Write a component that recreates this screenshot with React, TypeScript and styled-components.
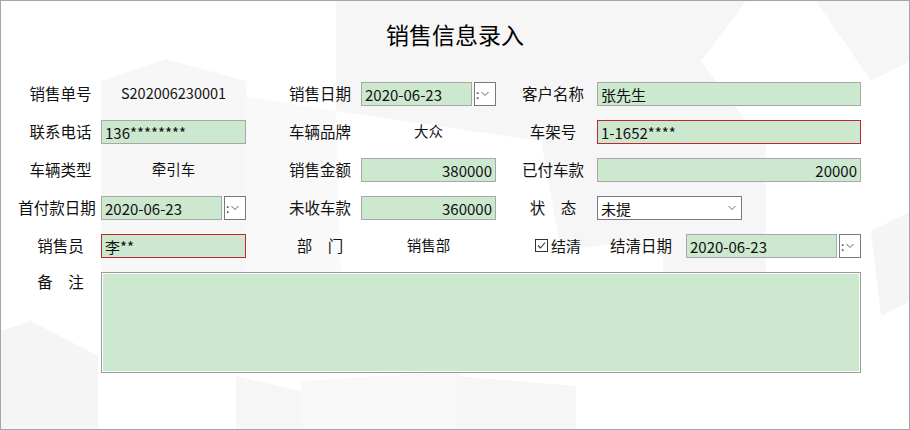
import React, { FC } from "react";
import styled, { createGlobalStyle } from "styled-components";

const GlobalStyle = createGlobalStyle`
  body {
    margin: 0;
    background: #fff;
    font-family: "Noto Sans CJK SC", "Noto Sans", sans-serif;
  }
`;

const GREEN = "#cce8cf";

const Backdrop: FC = () => (
  <BackSvg viewBox="0 0 910 430" width={910} height={430}>
    <polygon points="335,0 745,0 700,60 760,140 700,230 560,250 540,140 335,110" fill="#f6f6f6" />
    <polygon points="815,0 910,0 910,60 870,80" fill="#f6f6f6" />
    <polygon points="100,80 165,58 245,80 245,280 235,290 100,290" fill="#f7f7f7" />
    <polygon points="245,95 335,110 340,280 245,280" fill="#f9f9f9" />
    <polygon points="662,150 765,130 765,280 662,300" fill="#f6f6f6" />
    <polygon points="870,230 910,210 910,300 880,315" fill="#f5f5f5" />
    <polygon points="0,330 30,320 97,355 97,430 0,430" fill="#f5f5f5" />
    <polygon points="235,375 300,390 300,430 235,430" fill="#f6f6f6" />
    <polygon points="300,380 455,370 510,420 510,430 300,430" fill="#f8f8f8" />
    <polygon points="455,375 575,385 575,430 455,430" fill="#f6f6f6" />
  </BackSvg>
);

const Chevron: FC<{ color?: string }> = ({ color = "#606060" }) => (
  <svg width="8" height="6" viewBox="0 0 8 6">
    <path d="M0.5 1 L4 4.5 L7.5 1" fill="none" stroke={color} strokeWidth="1" />
  </svg>
);

const DateField: FC<{ value: string }> = ({ value }) => (
  <DateWrap>
    <Field>{value}</Field>
    <DropBtn>
      <Colon>:</Colon>
      <Chevron />
    </DropBtn>
  </DateWrap>
);

const App: FC = () => {
  return (
    <>
      <GlobalStyle />
      <Window>
        <Backdrop />
        <Content>
          <Title>销售信息录入</Title>
          <Form>
            <Label $pad={10}>销售单号</Label>
            <Value>S202006230001</Value>
            <Label $pad={33}>销售日期</Label>
            <DateField value="2020-06-23" />
            <Label $pad={13}>客户名称</Label>
            <Field>张先生</Field>

            <Label $pad={10}>联系电话</Label>
            <Field>136********</Field>
            <Label $pad={33}>车辆品牌</Label>
            <Value>大众</Value>
            <Label $pad={13}>车架号</Label>
            <Field $red>1-1652****</Field>

            <Label $pad={10}>车辆类型</Label>
            <Value>牵引车</Value>
            <Label $pad={33}>销售金额</Label>
            <Field $right>380000</Field>
            <Label $pad={13}>已付车款</Label>
            <Field $right>20000</Field>

            <Label $pad={3}>首付款日期</Label>
            <DateField value="2020-06-23" />
            <Label $pad={33}>未收车款</Label>
            <Field $right>360000</Field>
            <Label $pad={13}>状{"\u3000"}态</Label>
            <SelectCell>
              <Select>
                <span>未提</span>
                <Chevron color="#707070" />
              </Select>
            </SelectCell>

            <Label $pad={10}>销售员</Label>
            <Field $red>李**</Field>
            <Label $pad={33}>部{"\u3000"}门</Label>
            <Value>销售部</Value>
            <SettleRow>
              <Check>
                <CheckBox viewBox="0 0 13 13" width={13} height={13}>
                  <rect x="0.5" y="0.5" width="12" height="12" fill="#fff" stroke="#333" />
                  <path d="M3 6.5 L5.5 9 L10 3.5" fill="none" stroke="#333" strokeWidth="1.1" />
                </CheckBox>
                结清
              </Check>
              <SettleLabel>结清日期</SettleLabel>
              <SettleDate>
                <DateField value="2020-06-23" />
              </SettleDate>
            </SettleRow>

            <Label $pad={10} $top>
              备{"\u3000"}注
            </Label>
            <Notes />
          </Form>
        </Content>
      </Window>
    </>
  );
};

export default App;

const Window = styled.div`
  position: relative;
  width: 910px;
  height: 430px;
  box-sizing: border-box;
  border: 1px solid #a6a6a6;
  background: #fff;
  overflow: hidden;
  color: #111;
`;

const BackSvg = styled.svg`
  position: absolute;
  left: 0;
  top: 0;
  z-index: 0;
`;

const Content = styled.div`
  position: relative;
  z-index: 1;
  padding: 16px 0 0 9px;
`;

const Title = styled.h1`
  margin: 0;
  text-align: center;
  font-size: 23px;
  font-weight: 400;
  line-height: 34px;
  color: #000;
  padding-right: 9px;
`;

const Form = styled.div`
  display: grid;
  grid-template-columns: 91px 145px 115px 135px 101px 264px;
  grid-auto-rows: 24px;
  row-gap: 14px;
  margin-top: 31px;
  font-size: 15.5px;
`;

const Label = styled.div<{ $pad?: number; $top?: boolean }>`
  display: flex;
  justify-content: center;
  align-items: ${p => (p.$top ? "flex-start" : "center")};
  padding-left: ${p => p.$pad ?? 0}px;
  margin-top: ${p => (p.$top ? -2 : -2)}px;
  white-space: nowrap;
  color: #111;
`;

const Value = styled.div`
  display: flex;
  justify-content: center;
  align-items: center;
  margin-top: -4px;
  font-size: 14.5px;
  color: #111;
`;

const Field = styled.div<{ $red?: boolean; $right?: boolean }>`
  display: flex;
  align-items: center;
  justify-content: ${p => (p.$right ? "flex-end" : "flex-start")};
  box-sizing: border-box;
  height: 24px;
  padding: 0 3px;
  background: ${GREEN};
  border: 1px solid ${p => (p.$red ? "#c0262d" : "#a8a8a8")};
  font-size: 15px;
  color: #111;
  white-space: nowrap;
  overflow: hidden;
  flex: 1;
  min-width: 0;
`;

const DateWrap = styled.div`
  display: flex;
  gap: 2px;
  height: 24px;
`;

const DropBtn = styled.div`
  display: flex;
  align-items: center;
  gap: 2px;
  box-sizing: border-box;
  width: 22px;
  flex: none;
  padding-left: 1px;
  background: #fff;
  border: 1px solid #7a7a7a;
`;

const Colon = styled.span`
  font-size: 12px;
  line-height: 12px;
  color: #333;
`;

const SelectCell = styled.div`
  display: flex;
`;

const Select = styled.div`
  display: flex;
  align-items: center;
  justify-content: space-between;
  box-sizing: border-box;
  width: 145px;
  height: 24px;
  padding: 0 5px 0 3px;
  background: #fff;
  border: 1px solid #7a7a7a;
  font-size: 15px;
`;

const SettleRow = styled.div`
  grid-column: 5 / span 2;
  display: flex;
  align-items: center;
  padding-left: 39px;
`;

const Check = styled.div`
  display: flex;
  align-items: center;
  gap: 3px;
  font-size: 15px;
  width: 75px;
  margin-top: -2px;
`;

const CheckBox = styled.svg`
  flex: none;
`;

const SettleLabel = styled.div`
  width: 76px;
  white-space: nowrap;
  margin-top: -2px;
`;

const SettleDate = styled.div`
  flex: 1;
`;

const Notes = styled.div`
  grid-column: 2 / span 5;
  height: 101px;
  box-sizing: border-box;
  background: ${GREEN};
  border: 1px solid #9a9a9a;
  box-shadow: inset 1px 1px 0 #fff, inset -1px -1px 0 #fff;
`;
